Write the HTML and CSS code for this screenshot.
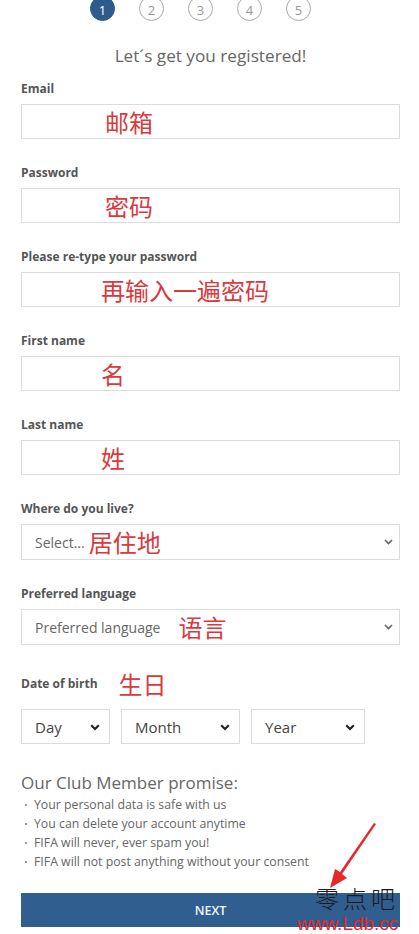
FILE: index.html
```html
<!DOCTYPE html>
<html lang="en">
  <head>
    <meta charset="UTF-8" />
    <meta name="viewport" content="width=device-width, initial-scale=1.0" />
    <title>Register</title>
    <link rel="stylesheet" href="styles.css">
  </head>
  <body>
    <div class="page">
      <ol class="steps">
        <li class="step active">1</li>
        <li class="step">2</li>
        <li class="step">3</li>
        <li class="step">4</li>
        <li class="step">5</li>
      </ol>

      <h1 class="title">Let´s get you registered!</h1>

      <form class="form">
        <div class="field">
          <label class="label" for="email">Email</label>
          <div class="control">
            <input id="email" class="input" type="text" />
            <span class="note">邮箱</span>
          </div>
        </div>

        <div class="field">
          <label class="label" for="password">Password</label>
          <div class="control">
            <input id="password" class="input" type="password" />
            <span class="note">密码</span>
          </div>
        </div>

        <div class="field">
          <label class="label" for="password2">Please re-type your password</label>
          <div class="control">
            <input id="password2" class="input" type="password" />
            <span class="note note-left">再输入一遍密码</span>
          </div>
        </div>

        <div class="field">
          <label class="label" for="first-name">First name</label>
          <div class="control">
            <input id="first-name" class="input" type="text" />
            <span class="note note-left">名</span>
          </div>
        </div>

        <div class="field">
          <label class="label" for="last-name">Last name</label>
          <div class="control">
            <input id="last-name" class="input" type="text" />
            <span class="note note-left">姓</span>
          </div>
        </div>

        <div class="field">
          <span class="label">Where do you live?</span>
          <div class="select">
            <span class="select-text">Select...</span>
            <span class="note-inline">居住地</span>
            <svg class="chevron" width="9" height="6" viewBox="0 0 9 6"><path d="M1 1l3.5 3.5L8 1" fill="none" stroke="#666" stroke-width="1.6"/></svg>
          </div>
        </div>

        <div class="field">
          <span class="label">Preferred language</span>
          <div class="select">
            <span class="select-text">Preferred language</span>
            <span class="note-inline lang">语言</span>
            <svg class="chevron" width="9" height="6" viewBox="0 0 9 6"><path d="M1 1l3.5 3.5L8 1" fill="none" stroke="#666" stroke-width="1.6"/></svg>
          </div>
        </div>

        <div class="field">
          <div class="label-row">
            <span class="label">Date of birth</span>
            <span class="note-inline dob">生日</span>
          </div>
          <div class="date-row">
            <div class="select date day">
              <span class="date-text">Day</span>
              <svg class="chevron" width="10" height="7" viewBox="0 0 10 7"><path d="M1.2 1.2L5 5l3.8-3.8" fill="none" stroke="#222" stroke-width="2.2"/></svg>
            </div>
            <div class="select date month">
              <span class="date-text">Month</span>
              <svg class="chevron" width="10" height="7" viewBox="0 0 10 7"><path d="M1.2 1.2L5 5l3.8-3.8" fill="none" stroke="#222" stroke-width="2.2"/></svg>
            </div>
            <div class="select date year">
              <span class="date-text">Year</span>
              <svg class="chevron" width="10" height="7" viewBox="0 0 10 7"><path d="M1.2 1.2L5 5l3.8-3.8" fill="none" stroke="#222" stroke-width="2.2"/></svg>
            </div>
          </div>
        </div>

        <div class="promise">
          <h2 class="promise-title">Our Club Member promise:</h2>
          <ul class="promise-list">
            <li>Your personal data is safe with us</li>
            <li>You can delete your account anytime</li>
            <li>FIFA will never, ever spam you!</li>
            <li>FIFA will not post anything without your consent</li>
          </ul>
        </div>

        <button class="next" type="button">NEXT</button>
      </form>

      <!-- watermark from the screenshot -->
      <svg class="arrow" width="50" height="70" viewBox="0 0 50 70">
        <polygon points="45,1 47,2 13,52 18,56 1,66 6,47 11,50" fill="#e8262b"/>
      </svg>
      <span class="mark">零点吧</span>
      <span class="mark-url">www.Ldb.cc</span>
    </div>
  </body>
</html>
```

FILE: styles.css
```css
* {
  box-sizing: border-box;
}

body {
  margin: 0;
  background: #fff;
  font-family: "Open Sans", "Noto Sans CJK SC", sans-serif;
  color: #555;
}

.page {
  position: relative;
  height: 934px;
  overflow: hidden;
  padding: 0 19px 0 21px;
}

.steps {
  list-style: none;
  margin: -4px 0 0;
  padding: 0 20px 0 0;
  display: flex;
  justify-content: center;
  gap: 24px;
}

.step {
  width: 25px;
  height: 25px;
  border: 1px solid #aaa;
  border-radius: 50%;
  display: flex;
  align-items: center;
  justify-content: center;
  font-size: 13px;
  color: #999;
  padding-top: 2px;
}

.step.active {
  background: #2c5b8c;
  border-color: #2c5b8c;
  color: #fff;
}

.title {
  margin: 23px 0 13px;
  font-size: 17.2px;
  line-height: 24px;
  font-weight: 400;
  text-align: center;
  color: #666;
}

.field {
  margin-bottom: 26px;
}

.label {
  display: block;
  font-size: 12px;
  line-height: 16px;
  font-weight: 700;
  color: #555;
  margin-bottom: 7px;
}

.control {
  position: relative;
}

.input {
  display: block;
  width: 100%;
  height: 35px;
  border: 1px solid #dcdcdc;
  background: #fff;
  margin: 0;
}

.note {
  position: absolute;
  left: 84px;
  top: 50%;
  transform: translateY(-50%);
  font-family: "Noto Sans CJK SC", sans-serif;
  font-size: 24px;
  line-height: 1;
  color: #d93a3e;
}

.note-left {
  left: 80px;
}

.note-inline {
  font-family: "Noto Sans CJK SC", sans-serif;
  font-size: 24px;
  line-height: 1;
  color: #d93a3e;
  margin-left: 4px;
}

.select {
  position: relative;
  height: 36px;
  border: 1px solid #dcdcdc;
  display: flex;
  align-items: center;
  padding-left: 13px;
}

.select-text {
  font-size: 14px;
  color: #666;
}

.note-inline.lang {
  margin-left: 18px;
}

.chevron {
  position: absolute;
  right: 6px;
  top: 50%;
  margin-top: -3px;
}

.label-row {
  display: flex;
  align-items: center;
  height: 32px;
  margin-top: -3px;
  margin-bottom: 9px;
}

.label-row .label {
  margin-bottom: 0;
}

.note-inline.dob {
  margin-left: 21px;
}

.date-row {
  display: flex;
  gap: 11px;
}

.select.date {
  height: 35px;
}

.day {
  width: 89px;
}

.month {
  width: 119px;
}

.year {
  width: 114px;
}

.date-text {
  font-size: 15px;
  color: #444;
}

.select.date .chevron {
  right: 9px;
}

.promise {
  margin-top: 27px;
}

.promise-title {
  margin: 0;
  font-size: 17px;
  line-height: 24px;
  font-weight: 400;
  color: #666;
}

.promise-list {
  list-style: none;
  margin: 0;
  padding: 0;
}

.promise-list li {
  font-size: 12.3px;
  line-height: 19px;
  color: #666;
  padding-left: 13px;
  position: relative;
}

.promise-list li::before {
  content: "";
  position: absolute;
  left: 4px;
  top: 9px;
  width: 2px;
  height: 2px;
  background: #999;
}

.next {
  display: block;
  width: 100%;
  height: 34px;
  margin-top: 22px;
  border: none;
  background: #305e8e;
  color: #f2f5f8;
  font-family: "Open Sans", sans-serif;
  font-size: 12.5px;
  font-weight: 600;
  cursor: pointer;
}

.arrow {
  position: absolute;
  left: 329px;
  top: 822px;
}

.mark {
  position: absolute;
  left: 315px;
  top: 887px;
  font-family: "Noto Sans CJK SC", "Liberation Serif", serif;
  font-weight: 300;
  font-size: 24px;
  line-height: 22px;
  letter-spacing: 4px;
  color: #1a1a1a;
}

.mark-url {
  position: absolute;
  left: 297px;
  top: 915px;
  font-family: "Liberation Sans", sans-serif;
  font-size: 19px;
  line-height: 18px;
  color: #e8262b;
}
```
